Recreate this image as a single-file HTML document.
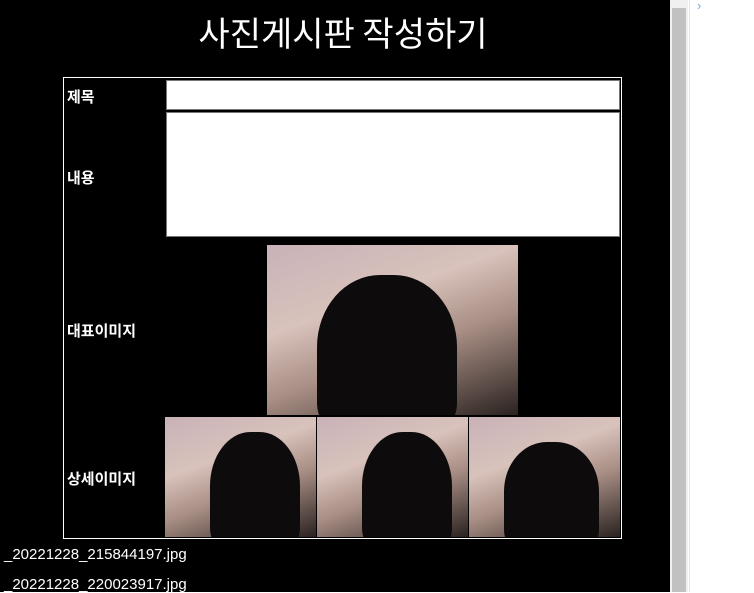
<!DOCTYPE html>
<html><head><meta charset="utf-8"><style>
body{margin:0;width:754px;height:592px;overflow:hidden;background:#fff;font-family:"Liberation Sans","Noto Sans CJK KR",sans-serif;position:relative}
.main{position:absolute;left:0;top:0;width:670px;height:592px;background:#000;color:#fff}
.sb{position:absolute;left:670px;top:0;width:18px;height:592px;background:#f0f0f0}
.thumb{position:absolute;left:672px;top:8px;width:14px;height:584px;background:#c1c1c1}
.rb{position:absolute;left:689px;top:0;width:1px;height:592px;background:#e3e3e3}
h1{position:absolute;left:0;width:686px;top:7px;margin:0;text-align:center;font-weight:normal;font-size:34px;font-family:"Noto Sans CJK KR",sans-serif}
.tbl{position:absolute;left:63px;top:77px;width:557px;height:460px;border:1px solid #fff}
.lbl{position:absolute;left:3px;font-weight:bold;font-size:15px;font-family:"Noto Sans CJK KR",sans-serif}
.inp{position:absolute;background:#fff;border:1px solid #767676;box-sizing:border-box}
.img{position:absolute;background:linear-gradient(160deg,#c9b2b8 0%,#d8c2bb 35%,#a88e84 60%,#2a2220 100%);overflow:hidden}
.cat{position:absolute;background:#0d0b0b;border-radius:45% 45% 20% 20%}
.f{position:absolute;left:4px;font-size:15px}
</style></head><body>
<div class="main">
<h1>사진게시판 작성하기</h1>
<div class="tbl">
<div class="lbl" style="top:8px">제목</div>
<div class="inp" style="left:102px;top:2px;width:454px;height:30px"></div>
<div class="lbl" style="top:89px">내용</div>
<div class="inp" style="left:102px;top:34px;width:454px;height:125px"></div>
<div class="lbl" style="top:242px">대표이미지</div>
<div class="img" style="left:203px;top:167px;width:251px;height:170px">
 <div class="cat" style="left:50px;top:30px;width:140px;height:160px"></div></div>
<div class="lbl" style="top:390px">상세이미지</div>
<div class="img" style="left:101px;top:339px;width:151px;height:120px"><div class="cat" style="left:45px;top:15px;width:90px;height:120px"></div></div>
<div class="img" style="left:253px;top:339px;width:151px;height:120px"><div class="cat" style="left:45px;top:15px;width:90px;height:120px"></div></div>
<div class="img" style="left:405px;top:339px;width:151px;height:120px"><div class="cat" style="left:35px;top:25px;width:95px;height:110px"></div></div>
</div>
<div class="f" style="top:546px">_20221228_215844197.jpg</div>
<div class="f" style="top:576px">_20221228_220023917.jpg</div>
</div>
<div class="sb"></div><div class="thumb"></div><div class="rb"></div>
<div style="position:absolute;left:697px;top:-2px;color:#7aa7e8;font-size:13px">›</div>
</body></html>
